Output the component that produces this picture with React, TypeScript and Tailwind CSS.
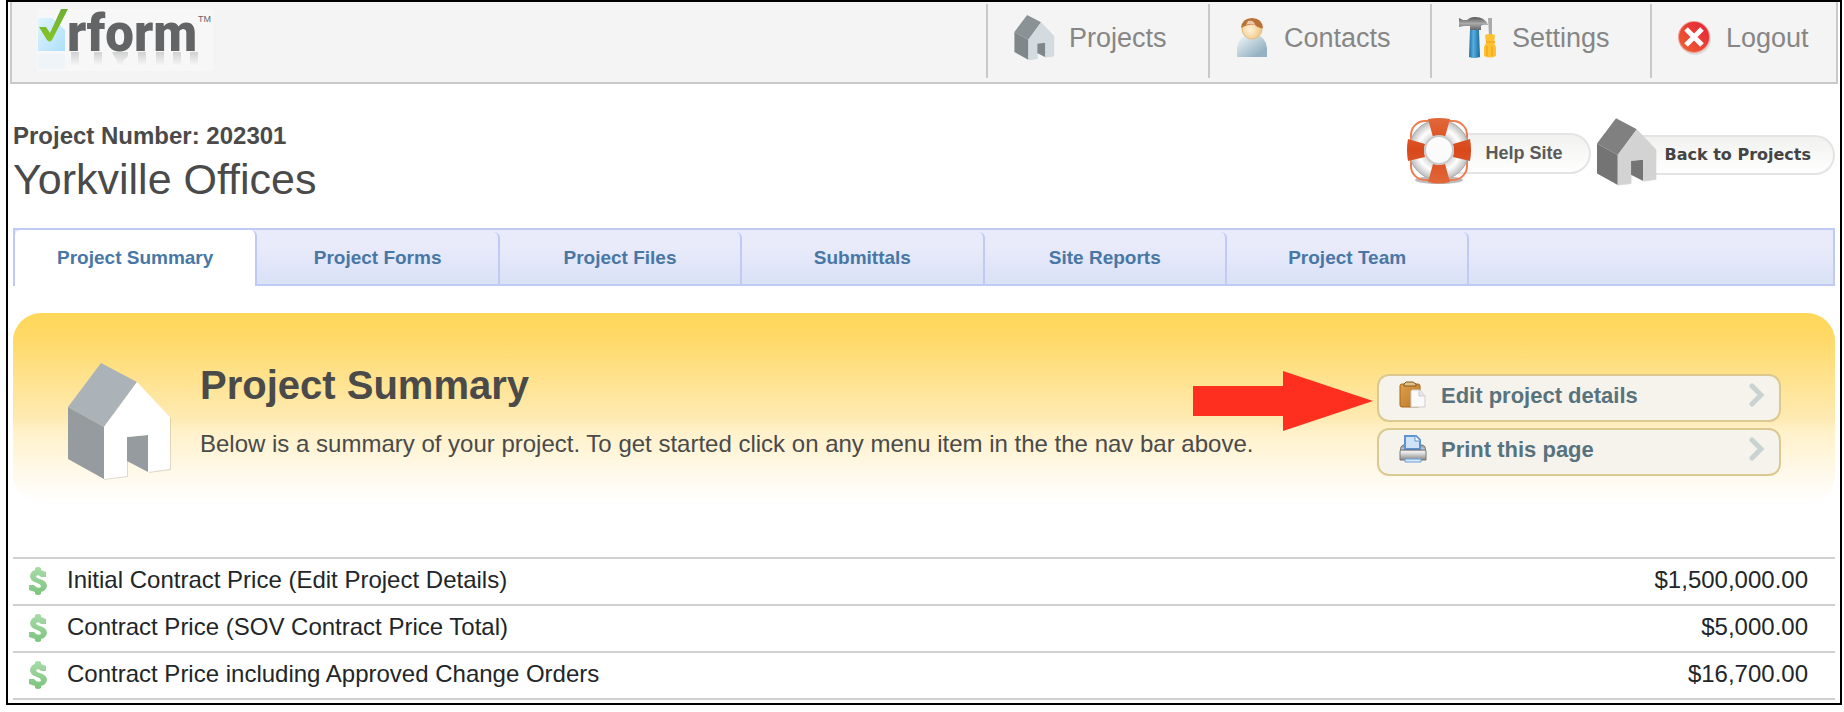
import React from "react";

const tabs = [
  "Project Summary",
  "Project Forms",
  "Project Files",
  "Submittals",
  "Site Reports",
  "Project Team",
];

const prices = [
  { label: "Initial Contract Price (Edit Project Details)", amount: "$1,500,000.00" },
  { label: "Contract Price (SOV Contract Price Total)", amount: "$5,000.00" },
  { label: "Contract Price including Approved Change Orders", amount: "$16,700.00" },
];

type HouseProps = {
  className: string;
  roof: string;
  side: string;
  front: string;
};

const House = ({ className, roof, side, front }: HouseProps) => (
  <svg viewBox="0 0 104 119" className={className} aria-hidden="true">
    <path d="M36 65 L69 20 L103 55 V107 L81 110 V73 L60 75 V114 L36 117 Z" fill="#000" opacity="0.12" />
    <path d="M33 0 L69 19 L36 64 L0 44 Z" fill={roof} />
    <path d="M0 44 L36 64 V116 L0 96 Z" fill={side} />
    <path d="M59 74 L80 72 V109 L59 98 Z" fill={side} />
    <path d="M36 64 L69 19 L102 54 V106 L80 109 V72 L59 74 V113 L36 116 Z" fill={front} />
  </svg>
);

const Logo = () => (
  <svg viewBox="0 -7 176 69" className="h-[69px] w-[176px] overflow-visible" role="img" aria-label="rform">
    <defs>
      <linearGradient id="paper" x1="0" y1="0" x2="1" y2="1">
        <stop offset="0" stopColor="#e0f4fd" />
        <stop offset="1" stopColor="#aee0fb" />
      </linearGradient>
      <linearGradient id="tick" x1="0" y1="0" x2="0" y2="1">
        <stop offset="0" stopColor="#6fae35" />
        <stop offset="1" stopColor="#86c626" />
      </linearGradient>
      <linearGradient id="mirror" x1="0" y1="0" x2="0" y2="1">
        <stop offset="0" stopColor="#8a8a8a" stopOpacity="0.35" />
        <stop offset="0.8" stopColor="#8a8a8a" stopOpacity="0" />
      </linearGradient>
    </defs>
    <rect width="176" height="62" fill="#f7f7f7" />
    <path d="M1 9 H15 L28 21 V42 H1 Z" fill="url(#paper)" />
    <path d="M1 45 H28 V60 H1 Z" fill="#e8f2f6" opacity="0.6" />
    <path d="M2 18 L9 18 L13 24 L24 0 L31 0 L15 31 Q13 34 10 31 Z" fill="url(#tick)" />
    <path
      d="M34 43 H42 V60 H34 Z M57 43 H65 V60 H57 Z M75 43 H91 V47 L86 52 V60 H80 V52 Z M101 43 H109 V60 H101 Z M119 43 H127 V60 H119 Z M136 43 H144 V60 H136 Z M153 43 H161 V60 H153 Z"
      fill="url(#mirror)"
    />
    <text x="30" y="42" className="fill-[#626466] font-[Roboto,sans-serif] text-[51px] font-black">
      rform
    </text>
    <text x="161" y="13" className="fill-[#666] font-['Liberation_Sans',Arial,sans-serif] text-[9px]">
      TM
    </text>
  </svg>
);

const PersonIcon = () => (
  <svg viewBox="0 0 34 42" className="h-[42px] w-[34px]" aria-hidden="true">
    <defs>
      <linearGradient id="shirt" x1="0" y1="0" x2="1" y2="1">
        <stop offset="0.15" stopColor="#e3ebf0" />
        <stop offset="0.8" stopColor="#94b2c3" />
      </linearGradient>
      <radialGradient id="face" cx="0.4" cy="0.55" r="0.6">
        <stop offset="0" stopColor="#fff3dc" />
        <stop offset="1" stopColor="#f0c47e" />
      </radialGradient>
    </defs>
    <path d="M1 40 V31 Q2 20 12 18 H20 Q30 20 31 31 V40 Z" fill="url(#shirt)" />
    <circle cx="16" cy="12" r="10" fill="url(#face)" stroke="#e3bb80" />
    <path d="M5 11 Q6 1 16 1 Q26 1 27 11 Q23 12 19 8 Q13 6 5 11 Z" fill="#bb7236" />
    <path d="M12 4 Q18 3 19 8 Q14 6 10 8 Z" fill="#ecc9a8" />
  </svg>
);

const ToolsIcon = () => (
  <svg viewBox="0 0 40 42" className="h-[42px] w-10" aria-hidden="true">
    <defs>
      <linearGradient id="handle" x1="0" y1="0" x2="1" y2="0">
        <stop offset="0" stopColor="#1b6fa8" />
        <stop offset="0.4" stopColor="#58aedd" />
        <stop offset="1" stopColor="#176a9f" />
      </linearGradient>
      <linearGradient id="steel" x1="0" y1="0" x2="0" y2="1">
        <stop offset="0" stopColor="#555" />
        <stop offset="0.5" stopColor="#aaa" />
        <stop offset="1" stopColor="#666" />
      </linearGradient>
    </defs>
    <path d="M30 1 L34 1 L34 18 H31 Z" fill="#aaa" />
    <path d="M1 1 L5 3 H9 Q12 0 17 0 Q27 0 30 8 Q25 7 23 9 V13 H12 V9 H6 L1 10 Z" fill="url(#steel)" />
    <path d="M12 13 H21 L22 40 Q16 42 11 40 Z" fill="url(#handle)" />
    <path d="M27 18 Q32 16 37 18 L36 26 L38 30 V39 Q32 42 26 39 V30 L28 26 Z" fill="#fcc232" />
    <path d="M29 29 V39 M34 29 V39 M28 25 H37" stroke="#f9ac24" strokeWidth="2" />
  </svg>
);

const CloseIcon = () => (
  <svg viewBox="0 0 34 34" className="h-[34px] w-[34px]" aria-hidden="true">
    <defs>
      <linearGradient id="red" x1="0" y1="1" x2="1" y2="0">
        <stop offset="0" stopColor="#f0642f" />
        <stop offset="1" stopColor="#e3203a" />
      </linearGradient>
    </defs>
    <circle cx="17" cy="18" r="16" fill="#ddd" />
    <circle cx="16" cy="16" r="16" fill="#f09a8c" />
    <circle cx="16" cy="16" r="15" fill="url(#red)" />
    <path d="M8 8 L24 24 M24 8 L8 24" stroke="#fff" strokeWidth="5" />
  </svg>
);

const LifeRing = () => (
  <svg viewBox="0 0 64 66" className="relative z-10 h-[66px] w-16 shrink-0" aria-hidden="true">
    <defs>
      <linearGradient id="ring" x1="0" y1="0" x2="0" y2="1">
        <stop offset="0" stopColor="#e2683a" />
        <stop offset="0.5" stopColor="#d8481a" />
        <stop offset="1" stopColor="#e2683a" />
      </linearGradient>
      <radialGradient id="white-ring">
        <stop offset="0.45" stopColor="#d4d4d4" />
        <stop offset="0.7" stopColor="#fff" />
        <stop offset="1" stopColor="#bdbdbd" />
      </radialGradient>
    </defs>
    <ellipse cx="32" cy="62" rx="24" ry="4" fill="#bbb" />
    <rect x="4" y="3" width="56" height="59" rx="14" fill="none" stroke="#ee7c50" strokeWidth="2" />
    <circle cx="32" cy="32" r="30" fill="url(#white-ring)" stroke="#aaa" />
    <path
      d="M21 1 Q32 -1 43 1 L38 19 Q32 16 26 19 Z M21 64 Q32 67 43 64 L38 46 Q32 48 26 46 Z M1 21 Q-1 32 1 43 L18 39 Q16 32 18 26 Z M63 21 Q65 32 63 43 L46 39 Q48 32 46 26 Z"
      fill="url(#ring)"
    />
    <circle cx="32" cy="32" r="14" fill="#fbfbfb" stroke="#c9c9c9" strokeWidth="2" />
  </svg>
);

const ClipboardIcon = () => (
  <svg viewBox="0 0 28 28" className="h-7 w-7" aria-hidden="true">
    <defs>
      <linearGradient id="board" x1="0" y1="0" x2="1" y2="1">
        <stop offset="0" stopColor="#e0a04a" />
        <stop offset="1" stopColor="#b97726" />
      </linearGradient>
    </defs>
    <rect x="1" y="3" width="20" height="23" rx="2" fill="url(#board)" stroke="#a8671d" />
    <path d="M5 5 V3 L7 1 H14 L17 3 V5 Z" fill="#e3c184" stroke="#7b5a28" />
    <path d="M13 9 H21 L26 15 V26 H12 V10 Z" fill="#fafafa" stroke="#cfcfcf" />
    <path d="M20 9 V15 H26" fill="#e6e6e6" stroke="#cfcfcf" />
  </svg>
);

const PrinterIcon = () => (
  <svg viewBox="0 0 28 28" className="h-7 w-7" aria-hidden="true">
    <defs>
      <linearGradient id="printer" x1="0" y1="0" x2="0" y2="1">
        <stop offset="0" stopColor="#8c8c8c" />
        <stop offset="0.45" stopColor="#f1f1f1" />
        <stop offset="1" stopColor="#868686" />
      </linearGradient>
    </defs>
    <path d="M2 12 Q3 10 5 10 H23 Q25 10 26 12 L27 17 V25 H1 V17 Z" fill="url(#printer)" stroke="#777" />
    <path d="M6 14 V1 H17 L21 5 V14 Z" fill="#cfe3f8" stroke="#5c93d0" strokeWidth="2" />
    <path d="M16 1 V6 H21" fill="#fff" stroke="#5c93d0" />
    <path d="M2 15 H26" stroke="#666" />
    <path d="M6 24 H22 V27 H6 Z" fill="#d6e7fa" stroke="#6c9fd6" />
  </svg>
);

const Chevron = () => (
  <svg viewBox="0 0 16 24" className="ml-auto h-6 w-4" aria-hidden="true">
    <path d="M3 3 L12 12 L3 21" fill="none" stroke="#c9d3d1" strokeWidth="5" strokeLinecap="round" />
  </svg>
);

const DollarIcon = () => (
  <svg viewBox="0 0 18 28" className="h-7 w-[18px]" aria-hidden="true">
    <defs>
      <linearGradient id="money" x1="0" y1="0" x2="0" y2="1">
        <stop offset="0" stopColor="#a9dba8" />
        <stop offset="1" stopColor="#7cc47e" />
      </linearGradient>
    </defs>
    <path
      d="M6 1 Q9 -1 12 1 V3 L17 5 V10 H12 Q10 7 7 9 Q7 11 11 12 Q18 14 18 19 Q17 24 12 25 V27 Q9 29 6 27 V25 L0 23 V18 H5 Q8 22 12 20 Q12 17 8 16 Q1 14 1 9 Q2 4 6 3 Z"
      fill="url(#money)"
    />
  </svg>
);

const menu = [
  {
    label: "Projects",
    width: "w-[222px]",
    icon: <House className="h-[46px] w-[41px]" roof="#8b9296" side="#7f878b" front="#d3dae0" />,
  },
  { label: "Contacts", width: "w-[222px]", icon: <PersonIcon /> },
  { label: "Settings", width: "w-[220px]", icon: <ToolsIcon /> },
  { label: "Logout", width: "w-[186px]", icon: <CloseIcon /> },
];

const actions = [
  { label: "Edit project details", icon: <ClipboardIcon /> },
  { label: "Print this page", icon: <PrinterIcon /> },
];

const App = () => {
  return (
    <div className="bg-white pb-[6px] pl-[6px] pr-[2px] font-['Liberation_Sans',Arial,sans-serif] text-[#4a4a4a]">
      <div className="border-2 border-black pb-[3px]">
        {/* Top bar */}
        <header className="mx-[2px] flex h-[82px] items-start justify-between border-x-2 border-b-2 border-[#c9c9c9] bg-[#f4f4f4]">
          <a href="#home" className="ml-[25px]">
            <Logo />
          </a>
          <nav className="mt-[2px] flex">
            {menu.map((item) => (
              <a
                key={item.label}
                href="#menu"
                className={`flex h-[74px] items-center gap-[14px] border-l-2 border-[#c9c9c9] pb-[6px] pl-[26px] text-[27px] text-[#868686] ${item.width}`}
              >
                {item.icon}
                {item.label}
              </a>
            ))}
          </nav>
        </header>

        <main className="px-[5px]">
          {/* Project title */}
          <div className="flex items-start justify-between">
            <div className="pb-[22px] pt-9">
              <p className="text-[24px] font-bold leading-8">Project Number: 202301</p>
              <h1 className="text-[43px] leading-[54px]">Yorkville Offices</h1>
            </div>
            <div className="flex gap-[6px] pt-[34px]">
              <a href="#help" className="flex items-start">
                <LifeRing />
                <span className="-ml-5 mt-[15px] flex h-[41px] items-center rounded-r-full border-2 border-l-0 border-[#e4e4e4] bg-linear-to-b from-[#f1f1ef] to-white pl-[34px] pr-[26px] text-[18px] font-bold text-[#5a5a5a]">
                  Help Site
                </span>
              </a>
              <a href="#projects" className="flex items-start">
                <House className="relative z-10 h-[69px] w-[60px]" roof="#808080" side="#747474" front="#d3d3d3" />
                <span className="-ml-5 mt-[17px] flex h-[40px] items-center rounded-r-full border-2 border-l-0 border-[#e4e4e4] bg-linear-to-b from-[#f1f1ef] to-white pl-[28px] pr-[22px] font-['DejaVu_Sans',Verdana,sans-serif] text-[16px] font-bold text-[#444]">
                  Back to Projects
                </span>
              </a>
            </div>
          </div>

          {/* Tabs */}
          <nav className="flex h-[58px] border-2 border-[#c0caf4] bg-linear-to-b from-[#e9ebfb] from-30% to-[#d9e1f5]">
            {tabs.map((tab, i) => (
              <a
                key={tab}
                href="#tab"
                className={
                  i === 0
                    ? "-mb-[2px] flex w-2/15 items-center justify-center rounded-t-md border-r-2 border-[#c0caf4] bg-white text-[19px] font-bold text-[#4877a6]"
                    : "-mb-[2px] mt-[2px] flex w-2/15 items-center justify-center rounded-tr-md border-r-2 border-[#c0caf4] pb-[2px] text-[19px] font-bold text-[#4877a6]"
                }
              >
                {tab}
              </a>
            ))}
          </nav>

          {/* Summary banner */}
          <section className="mt-[27px] flex h-[190px] items-start rounded-[28px] bg-[linear-gradient(#ffd75a,#ffd966_12%,#feebb4_56%,#fff1c8_62%,#fff9ea_84%,#ffffff)] pl-[55px] pr-[54px]">
            <House className="mt-[50px] h-[119px] w-[104px]" roof="#abb2b8" side="#969b9f" front="#ffffff" />
            <div className="ml-[28px] mt-12 flex-1">
              <h2 className="text-[40px] font-bold leading-[48px]">Project Summary</h2>
              <p className="mt-[19px] text-[24px] leading-8">
                Below is a summary of your project. To get started click on any menu item in the the nav bar above.
              </p>
            </div>
            <div className="relative mt-[61px] flex w-[404px] flex-col gap-[6px]">
              <svg viewBox="0 0 180 60" className="absolute -top-[3px] right-full mr-1 h-[60px] w-[180px]" aria-hidden="true">
                <path d="M0 15 H90 V0 L180 30 L90 60 V45 H0 Z" fill="#ff2f20" />
              </svg>
              {actions.map((action) => (
                <button
                  key={action.label}
                  className="flex h-12 items-center gap-[14px] rounded-xl border-2 border-[#dac990] bg-[#f6f3ec] pb-[6px] pl-5 pr-[14px] text-[22px] font-bold text-[#58727e]"
                >
                  {action.icon}
                  {action.label}
                  <Chevron />
                </button>
              ))}
            </div>
          </section>

          {/* Contract prices */}
          <table className="mt-[54px] w-full border-t-2 border-[#d0d0d0] text-[24px] text-[#222629]">
            <tbody>
              {prices.map((row) => (
                <tr key={row.label} className="h-[47px] border-b-2 border-[#d0d0d0]">
                  <td className="w-[54px] pb-[2px] pl-4">
                    <DollarIcon />
                  </td>
                  <td className="pb-[3px] leading-8">{row.label}</td>
                  <td className="pb-[3px] pr-[27px] text-right leading-8">{row.amount}</td>
                </tr>
              ))}
            </tbody>
          </table>
        </main>
      </div>
    </div>
  );
};

export default App;
